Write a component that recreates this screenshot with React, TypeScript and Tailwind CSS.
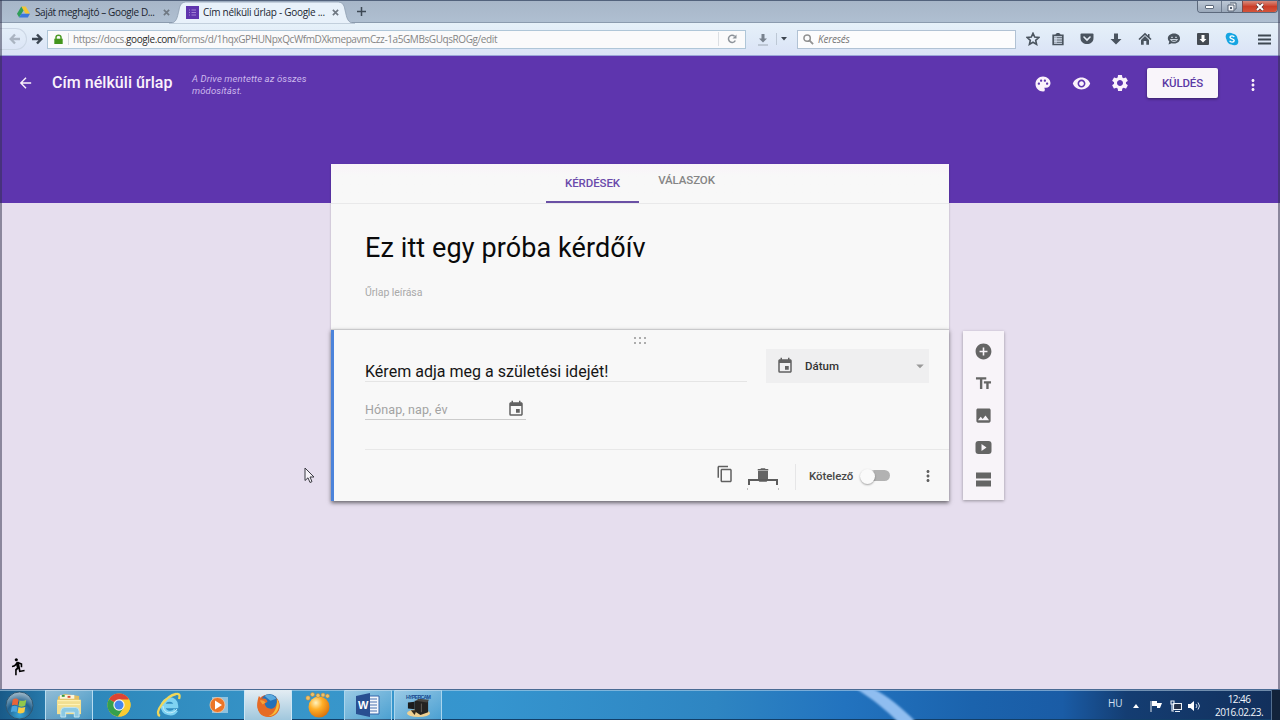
import React from 'react';
import {
  MdAddCircle,
  MdArrowBack,
  MdArrowDropDown,
  MdContentCopy,
  MdDelete,
  MdDirectionsRun,
  MdEvent,
  MdImage,
  MdMoreVert,
  MdPalette,
  MdSettings,
  MdTextFields,
  MdVisibility,
} from 'react-icons/md';

const DriveIcon = () => (
  <svg viewBox="0 0 24 22" className="w-[13px] h-3 shrink-0">
    <path d="M8 1h8l8 13h-8z" fill="#f5c631" />
    <path d="M8 1l4 7-8 13-4-7z" fill="#2f9e58" />
    <path d="M8 14h16l-4 7H4z" fill="#3d78dc" />
  </svg>
);

const FormsIcon = () => (
  <svg viewBox="0 0 13 13" className="w-[13px] h-[13px] shrink-0">
    <path d="M0 0h13v13H0z" fill="#5f35ae" />
    <path d="M3 4h1m1.5 0H10M3 6.5h1m1.5 0H10M3 9h1m1.5 0H10" stroke="#a98bd8" strokeWidth=".9" />
  </svg>
);

const CloseX = () => (
  <svg viewBox="0 0 8 8" className="w-[7px] h-[7px] shrink-0">
    <path d="M1 1l6 6M7 1L1 7" stroke="#6f7882" strokeWidth="1.9" />
  </svg>
);

const TabStrip = () => (
  <div className="h-[23px] shrink-0 flex items-start border-t border-[#52627c] border-b border-b-[#8b9bae] bg-linear-to-b from-[#a7b6c8] to-[#afbfd1] text-[10px] text-[#1b2530]">
    <div className="w-[173px] h-[22px] pl-[17px] flex items-center">
      <DriveIcon />
      <span className="ml-[5px] w-[128px] whitespace-nowrap tracking-[-0.38px]">Saját meghajtó – Google D...</span>
      <CloseX />
    </div>
    <div className="relative w-[182px] h-[22px] flex items-center">
      <svg viewBox="0 0 186 23" className="absolute left-[-4px] top-0 w-[186px] h-[23px]">
        <path d="M0 22.5C8 22 8 17 10 9c1-6 3-8 8-8h150c5 0 7 2 8 8 2 8 2 13 10 13.5z" fill="#e8f1fa" stroke="#8d9db0" strokeWidth=".8" />
        <path d="M0 22.6h186v1H0z" fill="#e5f0f9" />
      </svg>
      <div className="relative ml-[13px] flex items-center">
        <FormsIcon />
        <span className="ml-[4px] w-[129px] whitespace-nowrap tracking-[-0.28px]">Cím nélküli űrlap - Google ...</span>
        <CloseX />
      </div>
    </div>
    <svg viewBox="0 0 9 9" className="ml-[2px] mt-[6px] w-[9px] h-[9px]">
      <path d="M4.5 0v9M0 4.5h9" stroke="#3d4854" strokeWidth="1.5" />
    </svg>
    <div className="ml-auto mr-[2px] flex h-3 w-[81px] overflow-hidden rounded-b border border-t-0 border-[#5c697c]">
      <div className="flex w-[23px] items-center justify-center bg-linear-to-b from-[#bdc8d5] to-[#9aa8ba]">
        <div className="mt-px h-1 w-[9px] rounded-[1px] border border-[#5e6a7b] bg-white" />
      </div>
      <div className="flex w-[21px] items-center justify-center border-l border-[#6e7b8e] bg-linear-to-b from-[#bdc8d5] to-[#9aa8ba]">
        <svg viewBox="0 0 10 10" className="h-[10px] w-[10px]">
          <path d="M3 1h6v6H8M1 3h6v6H1z" fill="#f4f6f9" stroke="#556173" strokeWidth="1" />
          <path d="M3 5h2v2H3z" fill="#556173" />
        </svg>
      </div>
      <div className="flex flex-1 items-center justify-center border-l border-[#7c4a4a] bg-linear-to-b from-[#d68a7c] via-[#cb3d28] to-[#d4543a]">
        <svg viewBox="0 0 10 8" className="h-2 w-[10px]">
          <path d="M2 1l6 6M8 1L2 7" stroke="#5d3a3a" strokeWidth="3.4" />
          <path d="M2 1l6 6M8 1L2 7" stroke="#fff" strokeWidth="2" />
        </svg>
      </div>
    </div>
  </div>
);

const DARK = '#4a545f';

const browserButtons = [
  <svg viewBox="0 0 14 14" className="h-[14px] w-[14px]">
    <path d="M7 1.3l1.7 3.8 4.1.4-3.1 2.8.9 4.1L7 10.3l-3.6 2.1.9-4.1-3.1-2.8 4.1-.4z" fill="none" stroke={DARK} strokeWidth="1.6" />
  </svg>,
  <svg viewBox="0 0 14 14" className="h-[14px] w-[14px]">
    <path d="M4.5 3C4.5.4 9.5.4 9.5 3z" fill={DARK} />
    <path d="M2.2 3.3h9.6v9.2H2.2z" fill="none" stroke={DARK} strokeWidth="1.7" />
    <path d="M3.5 5.7h1m1 0H11M3.5 8h1m1 0H11M3.5 10.3h1m1 0H11" stroke={DARK} strokeWidth="1.1" />
  </svg>,
  <svg viewBox="0 0 14 14" className="h-[14px] w-[14px]">
    <path d="M1.5 1.5h11q1 0 1 1V6c0 8-13 8-13 0V2.5q0-1 1-1z" fill={DARK} />
    <path d="M4 5l3 3 3-3" stroke="#e6edf6" strokeWidth="1.6" fill="none" strokeLinecap="round" />
  </svg>,
  <svg viewBox="0 0 14 14" className="h-[14px] w-[14px]">
    <path d="M5 1.5h4V7h3.5L7 12.5 1.5 7H5z" fill={DARK} />
  </svg>,
  <svg viewBox="0 0 14 14" className="h-[14px] w-[14px]">
    <path d="M1 7.5l6-5.700 6 5.700" fill="none" stroke={DARK} strokeWidth="1.7" />
    <path d="M3 8l4-4 4 4v4.700H8.3V9H5.7v3.700H3zM10 2h1.5v3H10z" fill={DARK} />
  </svg>,
  <svg viewBox="0 0 14 14" className="h-[14px] w-[14px]">
    <path d="M7 1.5c8 0 8 10 0 10-1 0-1.500 0-2.300-.3L1.5 12.5l.8-3C-1 6.5 1.5 1.5 7 1.5z" fill={DARK} />
    <path d="M4 5.3h2m2 0h2M3.5 7.5h7c-1 2.500-6 2.500-7 0z" stroke="#d9e2ec" strokeWidth=".9" fill="none" />
  </svg>,
  <svg viewBox="0 0 14 14" className="h-[14px] w-[14px]">
    <rect x="1" y="1" width="12" height="12" rx="1" fill="#454b52" />
    <path d="M5.5 3h3v4h2L7 10.5 3.5 7h2z" fill="#fff" />
  </svg>,
  <svg viewBox="0 0 14 14" className="h-[14px] w-[14px]">
    <circle cx="4.5" cy="4.5" r="3.8" fill="#16a5e2" />
    <circle cx="9.5" cy="9.5" r="3.8" fill="#16a5e2" />
    <circle cx="7" cy="7" r="5.5" fill="#16a5e2" />
    <path d="M9.2 5C8.5 3.3 5 3.5 5 5.3 5 7.2 9.2 6.5 9.2 8.6c0 2-3.800 2-4.500.2" stroke="#fff" strokeWidth="1.4" fill="none" />
  </svg>,
];

const NavBar = () => (
  <div className="h-[33px] shrink-0 flex items-center border-b border-[#9aa6d8] bg-linear-to-b from-[#e6f1f9] to-[#dae3f6] text-[10px]">
    <div className="flex h-[22px] w-[27px] shrink-0 items-center rounded-r-full border border-l-0 border-[#ccd7e5] pl-[9px]">
      <svg viewBox="0 0 12 12" className="h-3 w-3">
        <path d="M11 6H2M6 1.5L1.7 6 6 10.5" stroke="#aab4c1" strokeWidth="2.3" fill="none" />
      </svg>
    </div>
    <svg viewBox="0 0 12 12" className="ml-[4px] h-3 w-3 shrink-0">
      <path d="M1 6h9M6 1.5L10.3 6 6 10.5" stroke="#3c4652" strokeWidth="2.5" fill="none" />
    </svg>
    <div className="ml-[4px] flex h-[19px] w-[699px] shrink-0 items-center border border-[#afc6d8] bg-[#fafafb]">
      <svg viewBox="0 0 9 11" className="ml-[6px] h-[11px] w-[9px]">
        <path d="M2 5V3.3C2 .4 7 .4 7 3.3V5" fill="none" stroke="#4c9a26" strokeWidth="1.5" />
        <path d="M.3 4.7h8.4V10H.3z" fill="#43951d" />
      </svg>
      <div className="ml-[5px] h-3 w-px bg-[#d5d9dd]" />
      <span className="ml-[4px] whitespace-nowrap tracking-[-0.41px] text-[#858585]">
        https://docs.<span className="text-[#2d2d2d]">google.com</span>/forms/d/1hqxGPHUNpxQcWfmDXkmepavmCzz-1a5GMBsGUqsROGg/edit
      </span>
      <div className="ml-auto h-[14px] w-px bg-[#dcdfe3]" />
      <svg viewBox="0 0 10 10" className="ml-[8px] mr-[8px] h-[10px] w-[10px]">
        <path d="M8.3 6.5A3.6 3.6 0 1 1 7.6 2.3" fill="none" stroke="#8c9299" strokeWidth="1.5" />
        <path d="M9.5.5v4h-4z" fill="#8c9299" />
      </svg>
    </div>
    <svg viewBox="0 0 12 13" className="ml-[11px] h-[13px] w-3 shrink-0">
      <path d="M4.5 1h3v4.5H10L6 9.5 2 5.5h2.5z" fill="#78828e" />
      <path d="M1 12h10" stroke="#9ea8b3" />
    </svg>
    <div className="ml-[7px] h-3 w-px bg-[#bdc8d5]" />
    <svg viewBox="0 0 6 4" className="ml-[4px] h-1 w-[6px] shrink-0">
      <path d="M0 0h6L3 3.5z" fill="#3d4650" />
    </svg>
    <div className="ml-[10px] flex h-[19px] w-[219px] shrink-0 items-center border border-[#b1c2d4] bg-[#fcfcfd]">
      <svg viewBox="0 0 12 12" className="ml-[5px] h-[11px] w-[11px]">
        <circle cx="4.5" cy="4.5" r="3.5" fill="none" stroke="#929292" strokeWidth="1.6" />
        <path d="M7 7l4 4" stroke="#929292" strokeWidth="2" />
      </svg>
      <span className="ml-[4px] italic tracking-[-0.2px] text-[#777]">Keresés</span>
    </div>
    <div className="ml-[10px] flex items-center">
      {browserButtons.map((icon, i) => (
        <div key={i} className={i === 0 ? 'w-[25px]' : i < 7 ? 'w-[29px]' : 'w-[33px]'}>
          {icon}
        </div>
      ))}
      <svg viewBox="0 0 13 11" className="h-[11px] w-[13px]">
        <path d="M0 1.5h13M0 5.5h13M0 9.5h13" stroke="#3e4852" strokeWidth="2" />
      </svg>
    </div>
  </div>
);

const FormHeader = () => (
  <header className="h-[147px] shrink-0 flex items-start bg-[#5e35ae] pl-[17px] font-['Roboto',sans-serif] text-[#fbf2fb]">
    <MdArrowBack className="mt-[18px] h-[18px] w-[17px]" />
    <h1 className="ml-[18px] mt-[15px] w-[140px] whitespace-nowrap text-[16px] leading-6 font-medium tracking-[0.05px]">Cím nélküli űrlap</h1>
    <p className="mt-[17px] w-[130px] text-[9.5px] leading-3 tracking-[0.12px] italic text-[#cdb9ed]">A Drive mentette az összes módosítást.</p>
    <div className="ml-auto mr-[18px] flex items-start">
      <MdPalette className="mt-[19px] h-[18px] w-[18px]" />
      <MdVisibility className="ml-[20px] mt-[18px] h-[19px] w-[19px]" />
      <MdSettings className="ml-[19px] mt-[17px] h-5 w-5" />
      <button className="ml-[17px] mt-[12px] h-[30px] w-[71px] rounded-[2px] bg-[#f9f5fa] pt-px text-[11.5px] font-medium tracking-[-0.15px] text-[#5c3aa5] shadow-[0_1px_3px_rgba(0,0,0,0.45)]">KÜLDÉS</button>
      <MdMoreVert className="ml-[26px] mt-[20px] h-[18px] w-[18px]" />
    </div>
  </header>
);

const FormIntro = () => (
  <section className="h-[165px] bg-[#f8f8f8] shadow-[0_1px_2px_rgba(0,0,0,0.25)]">
    <nav className="flex h-10 items-start border-b border-[#e9e9ea] bg-linear-to-b from-[#f9f3f9] to-[#f8f8f8] to-30% pl-[215px] text-[11.5px] leading-4 font-medium">
      <div className="h-[39px] w-[93px] border-b-2 border-[#6a50a5] pt-[11px] text-center text-[#6b4bab] tracking-[-0.1px]">KÉRDÉSEK</div>
      <div className="w-[95px] pt-[8px] text-center text-[#858585] tracking-[-0.1px]">VÁLASZOK</div>
    </nav>
    <h2 className="pl-[34px] pt-[26px] text-[27px] leading-9 tracking-[0.1px] text-[#0a0a0a]">Ez itt egy próba kérdőív</h2>
    <p className="pl-[34px] pt-[19px] text-[10.5px] leading-4 tracking-[-0.05px] text-[#a9a9a9]">Űrlap leírása</p>
  </section>
);

const DeleteIcon = () => (
  <div className="relative h-[26px] w-[34px]">
    <MdDelete className="absolute left-[8px] top-0 h-[18px] w-[18px]" />
    <svg viewBox="0 0 34 26" className="absolute inset-0 h-[26px] w-[34px]">
      <path d="M12 5h10v9H12z" fill="#646464" />
      <path d="M3 19v-5h28v5" fill="none" stroke="#5c5c5c" strokeWidth="2" />
      <path d="M1 23h1M32 23h1" stroke="#888" />
    </svg>
  </div>
);

const QuestionCard = () => (
  <section className="relative h-[172px] bg-[#f8f8f8] pl-[3px] shadow-[0_2px_4px_rgba(0,0,0,0.55)] border-t border-[#c9c9cb]">
    <div className="absolute left-0 top-0 h-full w-[3px] bg-[#4b83db]" />
    <div className="flex h-[18px] items-center justify-center pt-[2px] pr-[2px]">
      <svg viewBox="0 0 13 7" className="h-[7px] w-[13px]">
        <path d="M0 1h2M5 1h2M10 1h2M0 6h2M5 6h2M10 6h2" stroke="#adadad" strokeWidth="2" />
      </svg>
    </div>
    <div className="flex h-[36px] items-start pl-[31px]">
      <div className="mt-[12px] h-[22px] w-[382px] border-b border-[#e5e5e5] text-[16px] leading-[24px] tracking-[0.02px] text-[#151515]">Kérem adja meg a születési idejét!</div>
      <div className="ml-[19px] mt-[1px] flex h-[34px] w-[163px] items-center bg-[#efeff0]">
        <MdEvent className="ml-[10px] h-[18px] w-[18px] text-[#626262]" />
        <span className="ml-[11px] pt-px text-[11.5px] font-medium text-[#333]">Dátum</span>
        <MdArrowDropDown className="ml-auto h-5 w-[18px] text-[#999]" />
      </div>
    </div>
    <div className="ml-[31px] mt-[14px] flex h-[22px] w-[161px] items-center justify-between border-b border-[#ccc] pr-px">
      <span className="pt-[3px] text-[12.5px] tracking-[0.1px] text-[#a2a2a2]">Hónap, nap, év</span>
      <MdEvent className="h-[18px] w-[18px] text-[#626262]" />
    </div>
    <div className="ml-[31px] mt-[29px] flex h-[51px] items-start border-t border-[#e8e8e8] text-[#606060]">
      <MdContentCopy className="ml-[351px] mt-[15px] h-[18px] w-[18px]" />
      <div className="ml-[12px] mt-[16px]">
        <DeleteIcon />
      </div>
      <div className="ml-[15px] mt-[14px] h-[26px] w-px bg-[#e6e6e7]" />
      <span className="ml-[13px] mt-[18px] w-[51px] text-[11.5px] leading-4 font-medium text-[#484848] tracking-[-0.08px]">Kötelező</span>
      <div className="relative mt-[20px] h-[12px] w-[30px]">
        <div className="ml-[9px] h-[11px] w-[21px] rounded-full bg-[#b2b2b2]" />
        <div className="absolute left-0 top-[-1px] h-[15px] w-[15px] rounded-full bg-[#fafafa] shadow-[0_1px_2px_rgba(0,0,0,0.35)]" />
      </div>
      <MdMoreVert className="ml-[29px] mt-[17px] h-[18px] w-[18px]" />
    </div>
  </section>
);

const SideTools = () => (
  <aside className="ml-[14px] mt-[167px] flex h-[169px] w-[41px] flex-col items-center justify-between bg-[#f8f4f9] py-[11px] text-[#656565] shadow-[0_1px_3px_rgba(0,0,0,0.35)]">
    <MdAddCircle className="h-[19px] w-[19px]" />
    <MdTextFields className="h-[19px] w-[19px]" />
    <MdImage className="h-[19px] w-[19px]" />
    <svg viewBox="0 0 19 19" className="h-[19px] w-[19px]">
      <rect x="1.5" y="3" width="16" height="13" rx="3" fill="currentColor" />
      <path d="M7.5 6v7l5-3.5z" fill="#f8f4f9" />
    </svg>
    <svg viewBox="0 0 19 19" className="h-[19px] w-[19px]">
      <path d="M2 2.500h15v6H2zM2 10.500h15v6H2z" fill="currentColor" />
    </svg>
  </aside>
);

const StartOrb = () => (
  <svg viewBox="0 0 30 30" className="h-[29px] w-[29px]">
    <defs>
      <radialGradient id="orb" cx=".5" cy=".85" r=".85">
        <stop offset="0" stopColor="#38a5d8" />
        <stop offset=".55" stopColor="#21618f" />
        <stop offset="1" stopColor="#a9bfcd" />
      </radialGradient>
    </defs>
    <circle cx="15" cy="15" r="14" fill="url(#orb)" stroke="#31566f" />
    <path d="M8 9c3-2 4-1 6 0l-1 6c-2-1-4-1-6 0z" fill="#e8643a" />
    <path d="M15 9.5c2 1 4 1 7-.5l-1 6c-3 1.5-4 1.5-7 .5z" fill="#91c74b" />
    <path d="M7 16c2-1 4-1 6 0l-1 6c-2-1-4-1-6 0z" fill="#4ba4de" />
    <path d="M14 16.5c2 1 4 1 7 0l-1 5.5c-3 1.5-5 1.5-7 .5z" fill="#f9cd44" />
  </svg>
);

const ExplorerIcon = () => (
  <svg viewBox="0 0 28 26" className="h-[25px] w-[27px]">
    <path d="M2 4l7-3 15 2v18H2z" fill="#e2bf62" />
    <path d="M4 2h15v4H4z" fill="#faf6dc" />
    <path d="M6 3h3" stroke="#3b9b3e" strokeWidth="2" />
    <path d="M12 4h3" stroke="#d84e34" strokeWidth="2" />
    <path d="M1 7h25v15H1z" fill="#f2df91" />
    <path d="M2 8h23M2 12h23" stroke="#fff4b9" />
    <path d="M5 25v-6q0-4 4-4h11q4 0 4 4v6h-5v-5h-9v5z" fill="#8bc9e4" stroke="#c3e5f2" />
  </svg>
);

const ChromeIcon = () => (
  <svg viewBox="0 0 24 24" className="h-6 w-6">
    <circle cx="12" cy="12" r="11.5" fill="#f8cb32" />
    <path d="M12 12L2 6.2A11.5 11.5 0 0 1 22 6.2z" fill="#db4435" />
    <path d="M12 12L2 6.2a11.5 11.5 0 0 0 9 17.3l6-9z" fill="#35a04d" />
    <path d="M12 6.5h10.1A11.5 11.5 0 0 1 11 23.5l6-9z" fill="#f8cb32" />
    <circle cx="12" cy="12" r="5.7" fill="#f7f5ef" />
    <circle cx="12" cy="12" r="4.5" fill="#4285ef" />
  </svg>
);

const IeIcon = () => (
  <svg viewBox="0 0 26 26" className="h-[26px] w-[26px]">
    <path d="M20 18c-3 5-13 4-13-4s13-9 13 0H8" fill="none" stroke="#7fd3f2" strokeWidth="4.5" />
    <path d="M21 17c-4 6-14 5-14-3" fill="none" stroke="#c5edfa" strokeWidth="1" />
    <path d="M4 24C-3 21 10 4 20 2c4-1 4 2 3 5" fill="none" stroke="#f0d75a" strokeWidth="2.3" />
  </svg>
);

const PlayerIcon = () => (
  <svg viewBox="0 0 20 20" className="h-5 w-5">
    <path d="M3 2h16v16H3z" fill="#8fc2df" />
    <circle cx="8.5" cy="10" r="7.5" fill="#ec7527" stroke="#f5c9a7" strokeWidth=".8" />
    <path d="M6 5.5v9l7-4.5z" fill="#fff" />
  </svg>
);

const FirefoxIcon = () => (
  <svg viewBox="0 0 26 26" className="h-[25px] w-[25px]">
    <circle cx="13" cy="13" r="11.5" fill="#d95724" />
    <circle cx="14" cy="10" r="9" fill="#2471b8" />
    <path d="M9 3c4-3 10-1 12 3l-6 2z" fill="#5aaade" />
    <path d="M3 3l3 3c3-1 5 0 6 3l-3 2c1 6 8 7 11 3 2-3 2-6 1-9 8 10 1 20-8 20C2 25-1 14 3 3z" fill="#e66b25" />
    <path d="M22 6c5 9-1 18-9 18 6-2 9-8 9-18z" fill="#f7bd39" />
    <path d="M4 8c2-1 4 0 6 2l-3 2z" fill="#f5a33a" />
  </svg>
);

const GomIcon = () => (
  <svg viewBox="0 0 26 26" className="h-[26px] w-[26px]">
    <defs>
      <radialGradient id="gom" cx=".35" cy=".3" r=".8">
        <stop offset="0" stopColor="#fff3bd" />
        <stop offset=".4" stopColor="#ffaf27" />
        <stop offset="1" stopColor="#d66a0a" />
      </radialGradient>
    </defs>
    <circle cx="14" cy="15" r="10.5" fill="url(#gom)" />
    <g fill="#efc067" stroke="#b98532" strokeWidth=".5">
      <circle cx="3" cy="6" r="2.2" />
      <circle cx="7.5" cy="2.5" r="2" />
      <circle cx="13" cy="3.5" r="2" />
      <circle cx="18" cy="3" r="2" />
      <circle cx="22.5" cy="4" r="2" />
    </g>
  </svg>
);

const WordIcon = () => (
  <svg viewBox="0 0 26 24" className="h-6 w-[26px]">
    <path d="M12 3h12v18H12z" fill="#f4f7fc" stroke="#3465aa" />
    <path d="M15 6h7M15 9h7M15 12h7M15 15h7M15 18h7" stroke="#4870b0" />
    <path d="M1 3l14-3v24L1 21z" fill="#294f91" />
    <text x="3" y="16" fontSize="11" fontWeight="bold" fill="#fff" fontFamily="Liberation Sans, sans-serif">W</text>
  </svg>
);

const HyperCamIcon = () => (
  <svg viewBox="0 0 28 26" className="h-[25px] w-[27px]">
    <text x="1" y="6" fontSize="5.5" fontWeight="bold" textLength="26" fill="#17498f" fontFamily="Liberation Sans, sans-serif">HYPERCAM</text>
    <ellipse cx="14" cy="21" rx="12" ry="4" fill="#eed092" />
    <path d="M3 10l7-1v8l-7-1z" fill="#1c1c1c" />
    <path d="M10 8h14v12l-8 3-6-4z" fill="#242321" />
    <path d="M11 8l3-2 11 1-2 3z" fill="#494641" />
    <path d="M6 18h6l-2 5z" fill="#332a1e" />
    <path d="M17 11v9" stroke="#65615a" />
  </svg>
);

const launchers = [
  { icon: <ExplorerIcon />, cls: 'w-[48px] border-x border-[#b7dcf0] bg-linear-to-br from-white/50 to-white/10' },
  { icon: <ChromeIcon />, cls: 'w-[52px]' },
  { icon: <IeIcon />, cls: 'w-[48px]' },
  { icon: <PlayerIcon />, cls: 'w-[51px]' },
  { icon: <FirefoxIcon />, cls: 'w-[48px] border-x border-[#cce6f5] bg-linear-to-b from-[#e4edf3] to-[#a0c7dd]' },
  { icon: <GomIcon />, cls: 'w-[52px]' },
  { icon: <WordIcon />, cls: 'w-[48px] border-x border-[#a9d5ed] bg-linear-to-br from-white/50 to-white/10' },
  { icon: <HyperCamIcon />, cls: 'ml-[2px] w-[48px] border-x border-[#a9d5ed] bg-linear-to-br from-white/50 to-white/10' },
];

const Taskbar = () => (
  <footer className="relative h-[31px] shrink-0 flex items-stretch overflow-hidden border-t border-[#4a6b94] bg-[linear-gradient(90deg,#195a88_0%,#2c86b9_5%,#3896ca_25%,#3595cf_38%,#2e85c2_56%,#2273bf_66%,#1b63ad_76%,#1a5ca6_83%,#143d72_88%,#122f5b_100%)] shadow-[inset_0_1px_0_rgba(190,215,235,0.55),inset_0_-1px_0_#123f69]">
    <svg viewBox="0 0 80 30" className="absolute left-[852px] top-0 h-[30px] w-[80px]">
      <defs>
        <filter id="soft"><feGaussianBlur stdDeviation="1" /></filter>
      </defs>
      <path d="M3-2h17c16 8 30 20 44 34H46C34 20 22 10 3-2z" fill="#8fbdf0" filter="url(#soft)" />
    </svg>
    <div className="flex w-[45px] items-center pl-[5px]">
      <StartOrb />
    </div>
    <div className="flex">
      {launchers.map(({ icon, cls }, i) => (
        <div key={i} className={`flex items-center justify-center ${cls}`}>
          {icon}
        </div>
      ))}
    </div>
    <div className="ml-auto flex items-center text-[10px] text-[#f0f5fb]">
      <span className="mb-[3px] w-[25px] text-[#d4e1f2]">HU</span>
      <svg viewBox="0 0 6 4" className="mt-[2px] h-1 w-[6px]">
        <path d="M0 4h6L3 0z" fill="#fff" />
      </svg>
      <svg viewBox="0 0 12 12" className="ml-[11px] mt-[2px] h-3 w-3">
        <path d="M1 1v11" stroke="#dfe7ef" />
        <path d="M2 1h5v2h5l-2 5H7V6H2z" fill="#fff" />
      </svg>
      <svg viewBox="0 0 12 12" className="ml-[8px] mt-[2px] h-3 w-3">
        <path d="M3.5 3.5h8v6h-8z" fill="#26334a" stroke="#edf3fa" strokeWidth="1.1" />
        <path d="M5 11.5h5M1 1h3v3H1zM2 4v7h2" fill="none" stroke="#edf3fa" strokeWidth="1.1" />
      </svg>
      <svg viewBox="0 0 13 12" className="ml-[6px] mt-[2px] h-3 w-[13px]">
        <path d="M0 4h2.5L6 1v10L2.5 8H0z" fill="#fff" />
        <path d="M8 4q2 2 0 4M10 2.5q3 3.500 0 7" stroke="#d4e0ee" fill="none" />
      </svg>
      <div className="ml-[8px] w-[60px] pt-px text-center leading-[13px] tracking-[-0.6px]">
        <div>12:46</div>
        <div className="tracking-[-0.5px]">2016.02.23.</div>
      </div>
      <div className="ml-[2px] h-full w-[9px] border-l border-[#526e8f] bg-[#12233b]" />
    </div>
  </footer>
);

export default function App() {
  return (
    <div className="relative flex h-[720px] w-[1280px] flex-col overflow-hidden bg-[#e6deee] font-['Open_Sans','Noto_Sans',sans-serif]">
      <TabStrip />
      <NavBar />
      <FormHeader />
      <main className="flex min-h-0 flex-1 flex-col font-['Roboto',sans-serif]">
        <div className="-mt-[39px] flex items-start pl-[331px]">
          <div className="w-[618px]">
            <FormIntro />
            <QuestionCard />
          </div>
          <SideTools />
        </div>
        <MdDirectionsRun className="mt-auto mb-[13px] ml-[8px] h-[19px] w-[19px] -scale-x-100 text-black" />
      </main>
      <Taskbar />
      {/* window frame edges */}
      <div className="pointer-events-none absolute inset-x-0 top-0 h-[689px] border-x-2 border-[#30304a]/50" />
      {/* mouse pointer */}
      <svg viewBox="0 0 11 17" className="absolute left-[304px] top-[467px] h-[17px] w-[11px]">
        <path d="M1 1v12.5l3-2.7 2 4.7 2-.9-2-4.6h4z" fill="#f5f2f8" stroke="#3b3b42" strokeWidth="1" />
      </svg>
    </div>
  );
}
